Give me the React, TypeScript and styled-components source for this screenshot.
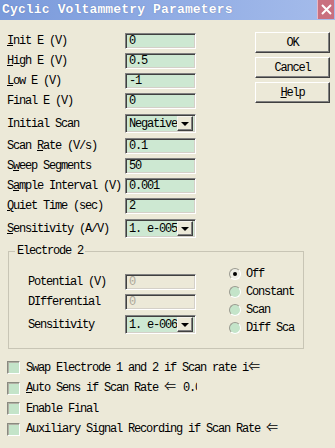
import styled, { createGlobalStyle } from "styled-components";

const GlobalStyle = createGlobalStyle`
  html, body {
    margin: 0;
    padding: 0;
    background: #ece9d8;
  }
`;

const FONT = `"Liberation Mono", "DejaVu Sans Mono", "DejaVu Sans", monospace`;

type Row = {
    label: React.ReactNode;
    value: string;
    combo?: boolean;
};

const U = ({ children }: { children: React.ReactNode }) => <Under>{children}</Under>;
const LeArrow = () => <Wide>⇐</Wide>;

const mainRows: Row[] = [
    { label: <><U>I</U>nit E (V)</>, value: "0" },
    { label: <><U>H</U>igh E (V)</>, value: "0.5" },
    { label: <><U>L</U>ow E (V)</>, value: "-1" },
    { label: "Final E (V)", value: "0" },
    { label: "Initial Scan", value: "Negative", combo: true },
    { label: <>Scan <U>R</U>ate (V/s)</>, value: "0.1" },
    { label: <>S<U>w</U>eep Segments</>, value: "50" },
    { label: <>S<U>a</U>mple Interval (V)</>, value: "0.001" },
    { label: <><U>Q</U>uiet Time (sec)</>, value: "2" },
    { label: <><U>S</U>ensitivity (A/V)</>, value: "1. e-005", combo: true },
];

const electrodeRows: Row[] = [
    { label: "Potential (V)", value: "0" },
    { label: "DIfferential", value: "0" },
    { label: "Sensitivity", value: "1. e-006", combo: true },
];

const radios = ["Off", "Constant", "Scan", "Diff Sca"];

const checks: { label: React.ReactNode; clip?: number }[] = [
    { label: <>Swap Electrode 1 and 2 if Scan rate i<LeArrow /></> },
    { label: <><U>A</U>uto Sens if Scan Rate <LeArrow /> 0.0</>, clip: 171 },
    { label: "Enable Final" },
    { label: <>Auxiliary Signal Recording if Scan Rate <LeArrow /></> },
];

const Field = ({ row, disabled }: { row: Row; disabled?: boolean }) =>
    row.combo ? (
        <Combo>
            <ComboText>{row.value}</ComboText>
            <ComboButton>
                <Arrow />
            </ComboButton>
        </Combo>
    ) : (
        <TextBox $disabled={disabled}>{row.value}</TextBox>
    );

export default function App() {
    return (
        <Window>
            <GlobalStyle />
            <TitleBar>
                <Title>Cyclic Voltammetry Parameters</Title>
                <CloseButton>
                    <svg width="11" height="11" viewBox="0 0 11 11">
                        <path d="M1 1 L10 10 M10 1 L1 10" stroke="#fff" strokeWidth="2" />
                    </svg>
                </CloseButton>
            </TitleBar>
            <Body>
                <TopSection>
                    <FormGrid $labelWidth={118}>
                        {mainRows.map((row, i) => (
                            <Cells key={i}>
                                <Label>{row.label}</Label>
                                <Field row={row} />
                            </Cells>
                        ))}
                    </FormGrid>
                    <ButtonColumn>
                        <PushButton>OK</PushButton>
                        <PushButton>Cancel</PushButton>
                        <PushButton>
                            <U>H</U>elp
                        </PushButton>
                    </ButtonColumn>
                </TopSection>
                <GroupBox>
                    <Legend>Electrode 2</Legend>
                    <GroupInner>
                        <FormGrid $labelWidth={97} $offset={9}>
                            {electrodeRows.map((row, i) => (
                                <Cells key={i}>
                                    <Label>{row.label}</Label>
                                    <Field row={row} disabled={!row.combo} />
                                </Cells>
                            ))}
                        </FormGrid>
                        <RadioColumn>
                            {radios.map((r, i) => (
                                <RadioRow key={r}>
                                    <RadioCircle $checked={i === 0}>{i === 0 && <Dot />}</RadioCircle>
                                    {r}
                                </RadioRow>
                            ))}
                        </RadioColumn>
                    </GroupInner>
                </GroupBox>
                <CheckList>
                    {checks.map((c, i) => (
                        <CheckRow key={i}>
                            <CheckBox />
                            <CheckLabel $clip={c.clip}>{c.label}</CheckLabel>
                        </CheckRow>
                    ))}
                </CheckList>
            </Body>
        </Window>
    );
}

const Window = styled.div`
    width: 335px;
    height: 448px;
    overflow: hidden;
    background: #ece9d8;
    font-family: ${FONT};
    font-size: 12px;
    letter-spacing: -1.2px;
    color: #000;
`;

const TitleBar = styled.div`
    height: 20px;
    display: flex;
    justify-content: space-between;
    background: linear-gradient(90deg, #7a9adb 0%, #8eaae3 45%, #a5bceb 100%);
    padding-left: 2px;
`;

const Title = styled.div`
    color: #fff;
    font-weight: bold;
    font-size: 13px;
    letter-spacing: 0.15px;
    line-height: 20px;
    text-shadow: 0 0 1px rgba(40, 60, 120, 0.5);
`;

const CloseButton = styled.div`
    width: 16px;
    height: 19px;
    margin-right: 1px;
    background: #c9707f;
    border-left: 1px solid #e8b8c4;
    display: flex;
    align-items: center;
    justify-content: center;
`;

const Body = styled.div`
    padding: 13px 5px 0 7px;
`;

const TopSection = styled.div`
    display: flex;
    align-items: flex-start;
`;

const FormGrid = styled.div<{ $labelWidth: number; $offset?: number }>`
    display: grid;
    grid-template-columns: ${(p) => p.$labelWidth}px 71px;
    row-gap: 4px;
    align-items: center;
    margin-top: ${(p) => p.$offset ?? 0}px;
`;

const Cells = styled.div`
    display: contents;
`;

const Label = styled.div`
    white-space: nowrap;
    line-height: 12px;
`;

const Under = styled.span`
    text-decoration: underline;
    text-underline-offset: 1px;
`;

const Wide = styled.span`
    font-family: "Noto Sans CJK SC", "DejaVu Sans", sans-serif;
    font-size: 12px;
    line-height: 12px;
    letter-spacing: 0;
    margin-right: 1px;
`;

const sunken = `
    box-sizing: border-box;
    border: 1px solid;
    border-color: #808080 #ffffff #ffffff #808080;
    box-shadow: inset 1px 1px #404040, inset -1px -1px #d4d0c8;
`;

const TextBox = styled.div<{ $disabled?: boolean }>`
    ${sunken}
    height: 16px;
    padding-left: 3px;
    line-height: 14px;
    background: ${(p) => (p.$disabled ? "#ece9d8" : "#cde8d2")};
    color: ${(p) => (p.$disabled ? "#aca899" : "#000")};
`;

const Combo = styled.div`
    ${sunken}
    height: 19px;
    margin: 1px 0;
    display: flex;
    align-items: center;
    padding: 2px;
    background: #cde8d2;
`;

const ComboText = styled.div`
    flex: 1;
    padding-left: 1px;
    white-space: nowrap;
    overflow: hidden;
`;

const ComboButton = styled.div`
    box-sizing: border-box;
    width: 16px;
    height: 15px;
    background: #ece9d8;
    border: 1px solid;
    border-color: #f4f3ee #404040 #404040 #f4f3ee;
    box-shadow: inset -1px -1px #808080;
    display: flex;
    align-items: center;
    justify-content: center;
`;

const Arrow = styled.div`
    width: 0;
    height: 0;
    border-left: 4px solid transparent;
    border-right: 4px solid transparent;
    border-top: 4px solid #000;
`;

const ButtonColumn = styled.div`
    margin-left: auto;
    margin-top: -1px;
    display: flex;
    flex-direction: column;
    gap: 4px;
`;

const PushButton = styled.div`
    box-sizing: border-box;
    width: 75px;
    height: 21px;
    display: flex;
    align-items: center;
    justify-content: center;
    background: #ece9d8;
    border: 1px solid;
    border-color: #ffffff #404040 #404040 #ffffff;
    box-shadow: inset -1px -1px #808080;
`;

const GroupBox = styled.fieldset`
    box-sizing: border-box;
    width: 296px;
    margin: 6px 0 0 1px;
    padding: 8px 0 11px 19px;
    border: 1px solid #c8c5b5;
    min-width: 0;
`;

const Legend = styled.legend`
    padding: 0 2px;
    margin-left: -13px;
    line-height: 12px;
`;

const GroupInner = styled.div`
    display: flex;
    align-items: flex-start;
`;

const RadioColumn = styled.div`
    margin-left: 33px;
    display: flex;
    flex-direction: column;
`;

const RadioRow = styled.div`
    height: 18px;
    display: flex;
    align-items: center;
    gap: 5px;
    white-space: nowrap;
`;

const RadioCircle = styled.div<{ $checked?: boolean }>`
    box-sizing: border-box;
    flex: none;
    width: 12px;
    height: 12px;
    border-radius: 50%;
    border: 1px solid;
    border-color: #9a9a90 #ffffff #ffffff #9a9a90;
    background: ${(p) => (p.$checked ? "#ecece4" : "#c4e4c9")};
    display: flex;
    align-items: center;
    justify-content: center;
`;

const Dot = styled.div`
    width: 4px;
    height: 4px;
    border-radius: 50%;
    background: #000;
`;

const CheckList = styled.div`
    margin-top: 12px;
    display: flex;
    flex-direction: column;
    gap: 7.5px;
`;

const CheckRow = styled.div`
    height: 13px;
    display: flex;
    align-items: center;
    gap: 6px;
`;

const CheckBox = styled.div`
    box-sizing: border-box;
    flex: none;
    width: 13px;
    height: 13px;
    border: 1px solid;
    border-color: #8a8a80 #ffffff #ffffff #8a8a80;
    box-shadow: inset 1px 1px #b0b0a4;
    background: #c4e4c9;
`;

const CheckLabel = styled.div<{ $clip?: number }>`
    white-space: nowrap;
    line-height: 16px;
    ${(p) => (p.$clip ? `max-width: ${p.$clip}px; overflow: hidden;` : "")}
`;
